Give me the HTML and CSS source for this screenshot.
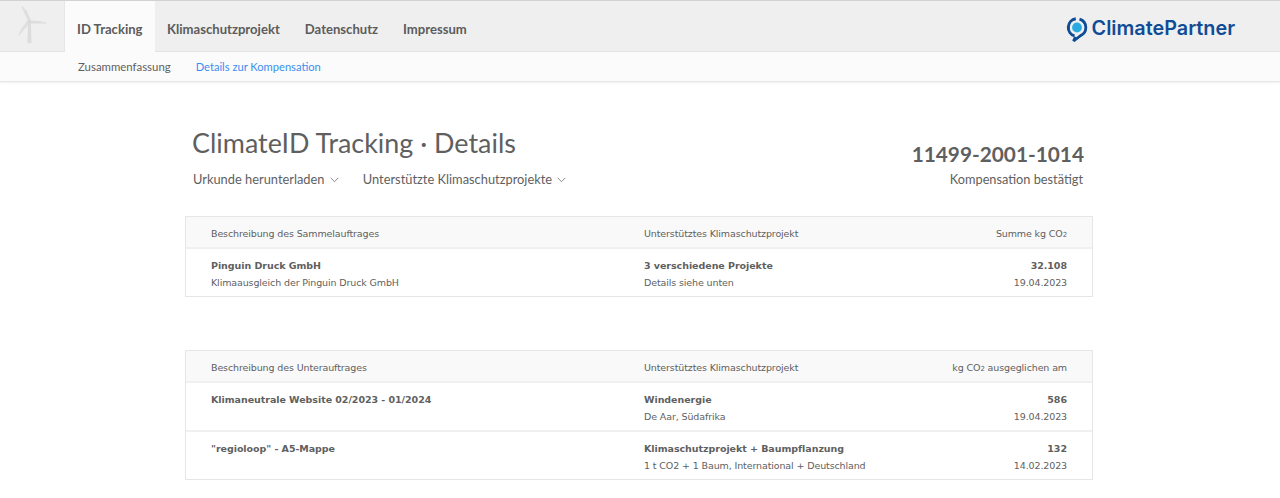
FILE: index.html
```html
<!DOCTYPE html>
<html lang="de">
<head>
<meta charset="utf-8">
<title>ClimateID Tracking</title>
<link rel="stylesheet" href="styles.css">
</head>
<body>
<header class="topbar">
  <div class="brand-cell">
    <svg class="turbine" width="34" height="42" viewBox="0 0 34 42" aria-hidden="true">
      <path d="M13 19H15.800L16.500 38.500Q14.500 40 12.400 38.500Z" fill="#dcdcdc"/>
      <path d="M12.800 16.500 6.300 2.200 6.900 2 11.500 6.500 15.800 15.500Z" fill="#dedede"/>
      <path d="M15.500 16.500 24 17 32 18.800 32 19.600 15.500 19.500Z" fill="#dedede"/>
      <path d="M12.500 16.500 15 19 8 27 3.400 32.600 3 32.300 6 25Z" fill="#e0e0e0"/>
      <circle cx="14.300" cy="17.700" r="1.800" fill="#d8d8d8"/>
    </svg>
  </div>
  <nav class="mainnav">
    <a class="tab active">ID Tracking</a>
    <a class="tab">Klimaschutzprojekt</a>
    <a class="tab">Datenschutz</a>
    <a class="tab">Impressum</a>
  </nav>
  <div class="logo">
    <svg width="24" height="28" viewBox="0 0 24 28" aria-hidden="true">
      <circle cx="12" cy="13.500" r="4.900" fill="#29abe2"/>
      <path d="M10.800 4.800A8.800 8.800 0 0 0 9.500 21.900" fill="none" stroke="#0f4c96" stroke-width="3"/>
      <path d="M14.500 5.100A8.800 8.800 0 0 1 15.500 21.600L8.500 27 10.500 22.800" fill="none" stroke="#0f4c96" stroke-width="2.800"/>
    </svg>
    <span class="logo-text">ClimatePartner</span>
  </div>
</header>
<nav class="subnav">
  <a class="sublink">Zusammenfassung</a>
  <a class="sublink current">Details zur Kompensation</a>
</nav>
<main class="content">
  <section class="heading">
    <div>
      <h1>ClimateID Tracking · Details</h1>
      <div class="menus">
        <span class="menu">Urkunde herunterladen <svg class="chev" width="9" height="6" viewBox="0 0 9 6"><path d="M.7.900 4.500 4.700 8.300.900" fill="none" stroke="#888" stroke-width="1"/></svg></span>
        <span class="menu">Unterstützte Klimaschutzprojekte <svg class="chev" width="9" height="6" viewBox="0 0 9 6"><path d="M.7.900 4.500 4.700 8.300.900" fill="none" stroke="#888" stroke-width="1"/></svg></span>
      </div>
    </div>
    <div class="status">
      <div class="idnum">11499-2001-1014</div>
      <div class="state">Kompensation bestätigt</div>
    </div>
  </section>

  <section class="panel first">
    <div class="row head">
      <div>Beschreibung des Sammelauftrages</div>
      <div>Unterstütztes Klimaschutzprojekt</div>
      <div class="num">Summe kg CO<small>2</small></div>
    </div>
    <div class="row">
      <div><b>Pinguin Druck GmbH</b><p>Klimaausgleich der Pinguin Druck GmbH</p></div>
      <div><b>3 verschiedene Projekte</b><p>Details siehe unten</p></div>
      <div class="num"><b>32.108</b><p>19.04.2023</p></div>
    </div>
  </section>

  <section class="panel second">
    <div class="row head">
      <div>Beschreibung des Unterauftrages</div>
      <div>Unterstütztes Klimaschutzprojekt</div>
      <div class="num">kg CO<small>2</small> ausgeglichen am</div>
    </div>
    <div class="row">
      <div><b>Klimaneutrale Website 02/2023 - 01/2024</b></div>
      <div><b>Windenergie</b><p>De Aar, Südafrika</p></div>
      <div class="num"><b>586</b><p>19.04.2023</p></div>
    </div>
    <div class="row">
      <div><b>"regioloop" - A5-Mappe</b></div>
      <div><b>Klimaschutzprojekt + Baumpflanzung</b><p>1 t CO2 + 1 Baum, International + Deutschland</p></div>
      <div class="num"><b>132</b><p>14.02.2023</p></div>
    </div>
  </section>
</main>
</body>
</html>
```
FILE: styles.css
```css
* { box-sizing: border-box; }
html, body { margin: 0; padding: 0; }
body {
  background: #fff;
  color: #5f5f5f;
  font-family: "Lato", "Noto Sans", sans-serif;
  height: 498px;
  overflow: hidden;
}
.topbar {
  display: flex;
  height: 52px;
  background: #efefef;
  border-top: 1px solid #d2d2d2;
  border-bottom: 1px solid #e4e4e4;
}
.brand-cell {
  width: 65px;
  height: 51px;
  padding: 3px 0 0 15px;
  border-right: 1px solid #e6e6e6;
}
.turbine { display: block; }
.mainnav { display: flex; }
.tab {
  display: flex;
  align-items: center;
  padding: 5px 12.500px 0;
  height: 51px;
  font-size: 13.100px;
  font-weight: 700;
  color: #5c5c5c;
}
.tab.active {
  background: #fbfbfb;
  padding: 5px 12px 0;
  margin-bottom: -1px;
}
.logo {
  margin-left: auto;
  margin-right: 45px;
  display: flex;
  align-items: center;
  gap: 3px;
  padding-top: 3px;
}
.logo-text {
  font-family: "Inter", sans-serif;
  font-size: 19.800px;
  font-weight: 600;
  color: #0f4c96;
}
.subnav {
  display: flex;
  gap: 25px;
  align-items: center;
  height: 30px;
  padding-left: 78px;
  background: #fbfbfb;
  border-bottom: 1px solid #e6e6e6;
  box-shadow: 0 1px 2px rgba(0,0,0,.06);
}
.sublink { font-size: 11.400px; color: #5f5f5f; }
.sublink.current { color: #3a8ff0; font-size: 11.150px; }
.content { width: 908px; margin-left: 185px; }
.heading {
  display: flex;
  justify-content: space-between;
  padding: 43px 10px 0 7px;
  height: 134px;
}
h1 {
  margin: 0;
  font-size: 26.900px;
  line-height: 36px;
  font-weight: 400;
  color: #5f5f5f;
}
.menus {
  display: flex;
  gap: 24px;
  margin-top: 9px;
  padding-left: 1px;
  font-size: 12.850px;
  line-height: 18px;
}
.chev { margin-left: 2px; vertical-align: 1px; }
.status { text-align: right; padding-top: 15px; }
.idnum {
  font-size: 20.800px;
  line-height: 28px;
  font-weight: 700;
  margin-right: -1px;
}
.state { font-size: 12.750px; line-height: 20px; margin-top: 1px; }
.panel {
  border: 1px solid #e6e6e6;
  font-family: "DejaVu Sans", Verdana, sans-serif;
  font-size: 9.500px;
  letter-spacing: -.12px;
  color: #5f5f5f;
}
.second { margin-top: 53px; }
.row {
  display: grid;
  grid-template-columns: 433px 1fr 140px;
  padding: 8px 25px 6px;
  height: 49px;
  border-top: 2px solid #f0f0f0;
  line-height: 17px;
}
.row.head {
  height: 30px;
  border-top: 0;
  background: #f9f9f9;
  padding: 8px 25px 0;
}
.row b { display: block; font-weight: 700; letter-spacing: -.05px; }
.row p { margin: 0; }
.num { text-align: right; }
small { font-size: 7px; }
```
